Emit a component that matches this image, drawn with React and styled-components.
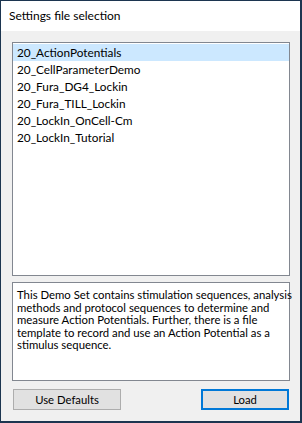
import React, { useState } from "react";
import styled, { createGlobalStyle } from "styled-components";

const GlobalStyle = createGlobalStyle`
  html, body {
    margin: 0;
    padding: 0;
    background: #ffffff;
  }
  body {
    font-family: Lato, "Open Sans", "Liberation Sans", sans-serif;
  }
`;

const Window = styled.div`
  width: 302px;
  height: 423px;
  box-sizing: border-box;
  border: 1px solid #1c3550;
  border-right-width: 2px;
  border-bottom-width: 2px;
  display: flex;
  flex-direction: column;
  background: #f0f0f0;
`;

const TitleBar = styled.div`
  height: 30px;
  flex-shrink: 0;
  background: #ffffff;
  display: flex;
  align-items: center;
  padding-left: 8px;
  padding-bottom: 1px;
  box-sizing: border-box;
  font-size: 12px;
  color: #000000;
`;

const Body = styled.div`
  flex: 1;
  display: flex;
  flex-direction: column;
  padding: 11px 10px 11px 11px;
`;

const ListBox = styled.ul`
  list-style: none;
  margin: 0;
  padding: 1px 0 0;
  height: 234px;
  box-sizing: border-box;
  border: 1px solid #828790;
  background: #ffffff;
`;

const ListItem = styled.li`
  height: 17px;
  line-height: 17px;
  padding-left: 4px;
  font-size: 11.8px;
  color: #000000;
  background: ${(p) => (p.$selected ? "#cce8ff" : "transparent")};
  cursor: default;
  white-space: nowrap;
`;

const Description = styled.div`
  margin-top: 6px;
  height: 99px;
  box-sizing: border-box;
  border: 1px solid #828790;
  background: #ffffff;
  padding: 6px 4px 5px;
  font-size: 11.35px;
  line-height: 12.5px;
  color: #000000;
`;

const Line = styled.div`
  white-space: nowrap;
`;

const ButtonRow = styled.div`
  margin-top: 8px;
  display: flex;
  justify-content: space-between;
  padding: 0 1px 0 1px;
`;

const Button = styled.button`
  width: ${(p) => p.$width}px;
  height: 21px;
  box-sizing: border-box;
  background: #e1e1e1;
  border: ${(p) => (p.$default ? "2px solid #0078d7" : "1px solid #adadad")};
  font-family: inherit;
  font-size: 11.3px;
  color: #000000;
  padding: 0;
  cursor: default;
`;

const files = [
  "20_ActionPotentials",
  "20_CellParameterDemo",
  "20_Fura_DG4_Lockin",
  "20_Fura_TILL_Lockin",
  "20_LockIn_OnCell-Cm",
  "20_LockIn_Tutorial",
];

const descriptionLines = [
  "This Demo Set contains stimulation sequences, analysis",
  "methods and protocol sequences to determine and",
  "measure Action Potentials. Further, there is a file",
  "template to record and use an Action Potential as a",
  "stimulus sequence.",
];

const App = () => {
  const [selected, setSelected] = useState(0);

  return (
    <>
      <GlobalStyle />
      <Window>
        <TitleBar>Settings file selection</TitleBar>
        <Body>
          <ListBox>
            {files.map((name, index) => (
              <ListItem
                key={name}
                $selected={index === selected}
                onClick={() => setSelected(index)}
              >
                {name}
              </ListItem>
            ))}
          </ListBox>
          <Description>
            {descriptionLines.map((line) => (
              <Line key={line}>{line}</Line>
            ))}
          </Description>
          <ButtonRow>
            <Button $width={108}>Use Defaults</Button>
            <Button $width={88} $default>
              Load
            </Button>
          </ButtonRow>
        </Body>
      </Window>
    </>
  );
};

export default App;
